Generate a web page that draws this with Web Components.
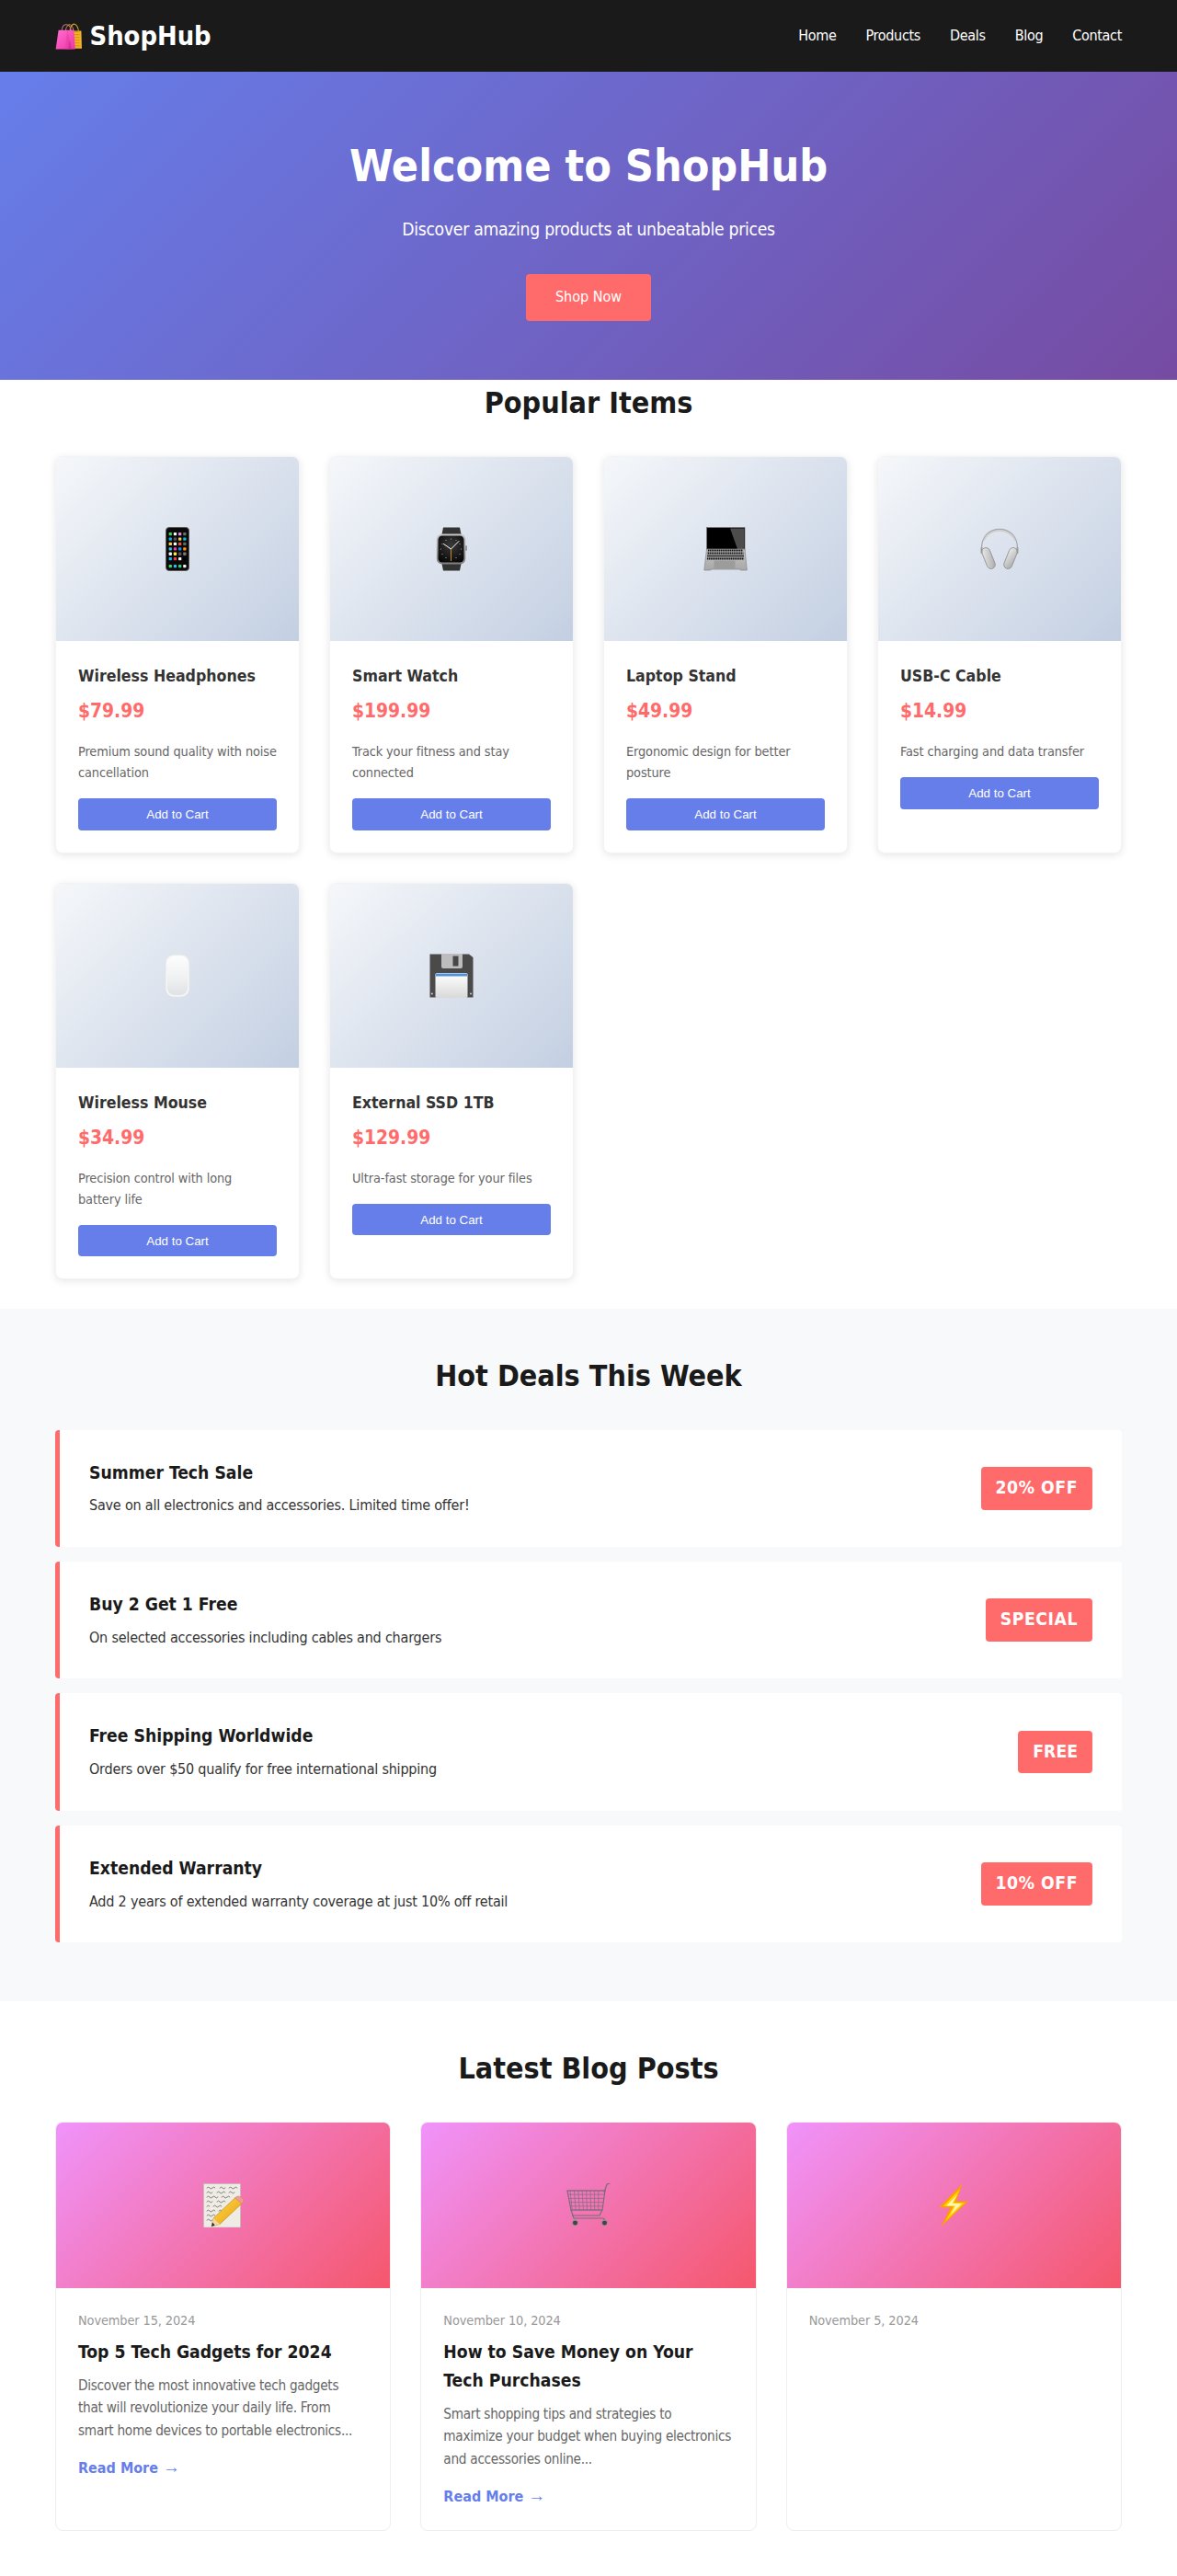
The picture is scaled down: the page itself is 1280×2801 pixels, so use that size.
<!DOCTYPE html>
<html lang="en"><head><meta charset="utf-8"><title>ShopHub</title>
<style>
html,body{margin:0;padding:0;background:#fff}
body{font-family:"DejaVu Sans Condensed","DejaVu Sans",sans-serif;line-height:1.6;color:#333}
</style></head><body>
<shop-app></shop-app>
<script>
function def(name,css,html){
  const t=document.createElement('template');
  t.innerHTML='<style>'+css+'</style>'+html;
  customElements.define(name,class extends HTMLElement{
    constructor(){super();this.attachShadow({mode:'open'}).appendChild(t.content.cloneNode(true));
      for(const a of this.getAttributeNames()){
        const n=this.shadowRoot.querySelector('[data-a="'+a+'"]');if(n)n.textContent=this.getAttribute(a);
        const i=this.shadowRoot.querySelector('emoji-icon[data-i="'+a+'"]');if(i)i.setAttribute('name',this.getAttribute(a));
      }}
  });
}
const phoneRows=[['#35d65a','#f4f4f4','#d98ae0','#6d6d6d'],['#13a9f0','#555','#f7c948','#15b8d8'],['#ffd23c','#f4f4f4','#e8543f','#666'],['#28c3ee','#e93dae','#1f8fe8','#ff9500'],['#f4f4f4','#f5e642','#555','#777'],['#18b7f5','#ee3f3f','#f4f4f4','#000']];
const px=[14.6,19.8,25,30.2],py=[6,11.4,16.8,22.2,27.6,33];
let phoneApps='';phoneRows.forEach((r,j)=>r.forEach((c,i)=>{phoneApps+=`<rect x="${px[i]}" y="${py[j]}" width="3.3" height="3.3" rx=".7" fill="${c}"/>`}));
['#42d66b','#2cb8f0','#3bd07a','#f2f2f2'].forEach((c,i)=>{phoneApps+=`<rect x="${px[i]}" y="41" width="3.3" height="3.3" rx=".7" fill="${c}"/>`});
let ticks='';for(let a=0;a<12;a++){const r=a*Math.PI/6;ticks+=`<circle cx="${(23.5+Math.sin(r)*11).toFixed(1)}" cy="${(24+Math.cos(r)*11).toFixed(1)}" r=".55" fill="#bbb"/>`}
let keys='';for(let y=25.5;y<36;y+=3){keys+=`<path d="M${5-(y-24)*.1} ${y}H${43+(y-24)*.1}" stroke="#111" stroke-width="2.2" stroke-dasharray="1.5 .5"/>`}
let grid='';for(let x=4;x<=38;x+=4.4){grid+=`<path d="M${x} 8L${x+(20-x)*.07+1} 29"/>`}for(let y=8;y<=29;y+=4.2){grid+=`<path d="M${1+(y-8)*.2} ${y}H${42-(y-8)*.18}"/>`}
const ICONS={
phone:`<rect x="11.5" y=".5" width="25" height="47" rx="3.5" fill="#0a0a0a" stroke="#5b5b5b"/>${phoneApps}`,
watch:`<defs><radialGradient id="wf" cx=".5" cy=".35" r=".8"><stop offset="0" stop-color="#3a3a3a"/><stop offset="1" stop-color="#000"/></radialGradient><linearGradient id="wb" x1="0" y1="0" x2="0" y2="1"><stop offset="0" stop-color="#c8c8c8"/><stop offset="1" stop-color="#808080"/></linearGradient></defs>
<path d="M13.5 8L15 .5H33L34.5 8ZM13.5 40L15 47.5H33L34.5 40Z" fill="#333"/><rect x="7.8" y="7.5" width="31.5" height="33" rx="6" fill="url(#wb)"/><rect x="39" y="20" width="2" height="6" rx="1" fill="#999"/><rect x="9.5" y="9.5" width="28" height="29" rx="4.5" fill="url(#wf)"/>${ticks}<path d="M23.5 24L15.5 18.5M23.5 24L32 15.5" stroke="#fff" stroke-width="1" stroke-linecap="round"/><path d="M23.5 24V37" stroke="#c98a22" stroke-width="1"/>`,
laptop:`<defs><linearGradient id="lb" x1="0" y1="0" x2="0" y2="1"><stop offset="0" stop-color="#c4c4c4"/><stop offset="1" stop-color="#a8a8a8"/></linearGradient></defs>
<rect x="3.5" y=".5" width="41.5" height="24.5" fill="#000" stroke="#7c7c7c" stroke-width=".8"/><path d="M29 1.5H44L44 24H37Z" fill="#4c4c4c"/><path d="M3.5 24H45L47.3 47H40.5L39 46H9L7.5 47H.8Z" fill="url(#lb)" stroke="#858585" stroke-width=".7"/>${keys}<rect x="11.5" y="36.5" width="23" height="9" fill="#9c9c9c"/>`,
headphones:`<defs><linearGradient id="hc" x1="0" y1="0" x2="1" y2="1"><stop offset="0" stop-color="#eee"/><stop offset="1" stop-color="#a9a9a9"/></linearGradient></defs>
<path d="M4.5 26C3.5 9 14 2.5 24 2.500S44.500 9 43.500 26" fill="none" stroke="#a8a8a8" stroke-width="1.300"/><path d="M7 15C11 6 18 4 24 4S37 6 41 15" fill="none" stroke="#cfcfcf" stroke-width="1.400"/>
<rect x="7.500" y="22" width="9" height="24" rx="4.500" transform="rotate(-22 12 34)" fill="url(#hc)" stroke="#8f8f8f" stroke-width=".8"/><rect x="31.500" y="22" width="9" height="24" rx="4.500" transform="rotate(22 36 34)" fill="url(#hc)" stroke="#8f8f8f" stroke-width=".8"/><path d="M4.500 23V28M43.500 23V28" stroke="#999" stroke-width="1.800" stroke-linecap="round"/>`,
mouse:`<defs><linearGradient id="mg" x1="0" y1="0" x2="0" y2="1"><stop offset="0" stop-color="#fdfdfd"/><stop offset=".55" stop-color="#f0f1f2"/><stop offset="1" stop-color="#dfe3e5"/></linearGradient></defs><rect x="11" y="1" width="26" height="46" rx="9" fill="#f6f6f6" stroke="#e2e4e6" stroke-width=".8"/><rect x="12.8" y="2.5" width="22.4" height="42.5" rx="8" fill="url(#mg)"/>`,
floppy:`<defs><linearGradient id="fl" x1="0" y1="0" x2="0" y2="1"><stop offset="0" stop-color="#fff"/><stop offset="1" stop-color="#d9d9d9"/></linearGradient></defs>
<path d="M.5.5H43L47.5 4V47.5H.5Z" fill="#4a4a4a"/><path d="M13 0H36V14Q36 16 34 16H15Q13 16 13 14Z" fill="#bdbdbd"/><rect x="25.5" y="2.5" width="6" height="11" fill="#474747"/><rect x="6.5" y="21" width="35" height="27" rx="1.5" fill="url(#fl)"/><rect x="7" y="21.5" width="34" height="3" fill="#4e8fd6"/><circle cx="2.8" cy="43.5" r=".9" fill="#ddd"/><circle cx="45" cy="43.5" r=".9" fill="#ddd"/>`,
memo:`<defs><linearGradient id="pe" x1="0" y1="0" x2="1" y2="1"><stop offset="0" stop-color="#ffd84a"/><stop offset="1" stop-color="#e8a010"/></linearGradient></defs>
<rect x="2.5" y=".5" width="40" height="47.5" fill="#eeece4" stroke="#bdbab0" stroke-width=".6"/><g fill="none" stroke="#555" stroke-width=".7" stroke-linecap="round"><path d="M6 5q2-2 3 0t3 0 3 0M20 5q2-2 3 0t3 0M30 5q2-2 3 0t3 0 3 0"/><path d="M6 10q2-2 3 0t3 0M17 10q2-2 3 0t3 0 3 0M30 10q2-2 3 0t3 0"/><path d="M6 15q2-2 3 0t3 0 3 0 3 0M22 15q2-2 3 0t3 0 3 0"/><path d="M6 20q2-2 3 0t3 0M17 20q2-2 3 0t3 0 3 0"/><path d="M6 25q2-2 3 0M13 25q2-2 3 0t3 0 3 0"/><path d="M6 30q2-2 3 0t3 0 3 0M19 30q2-2 3 0"/><path d="M6 35q2-2 3 0t3 0 3 0"/><path d="M6 40q2-2 3 0t3 0"/></g>
<path d="M37 15.5L44.5 21.5L20 44.5L11 47L13 38Z" fill="url(#pe)" stroke="#a87a10" stroke-width=".5"/><path d="M38 14.5Q41 13 44 15.5T45.5 20.5L44 22L36.5 16Z" fill="#ef9a9a" stroke="#c77" stroke-width=".5"/><path d="M13 38L20 44.5L11 47Z" fill="#f1d6a8"/><path d="M12 42.5L14.6 45.5L11 47Z" fill="#222"/>`,
cart:`<g fill="none" stroke="#8a6f86" stroke-width=".8">${grid}</g><g fill="none" stroke="#7d6a7c" stroke-width="1.2"><path d="M1 8H42L39 29H5Z"/><path d="M41 10L44 1L47.5 0"/><path d="M39 29L36 35H6M5 29L8 38H40L42 40"/></g><circle cx="9.5" cy="43" r="3" fill="#444" stroke="#aaa" stroke-width=".7"/><circle cx="41.5" cy="43" r="3" fill="#444" stroke="#aaa" stroke-width=".7"/><path d="M9.5 38V41M41.5 38V41" stroke="#888" stroke-width="1"/>`,
bolt:`<path d="M33.5 .5L8 26.5H20.5L10 47.5L40 19.5H27Z" fill="#ff9d00"/><path d="M31 6L12.5 25H24L15 41.5L36.5 21H24.5Z" fill="#ffd200"/><path d="M28.5 12L16 24.5H26L20.5 34.5L33 22H22.5Z" fill="#fff6b8"/>`,
bag:`<defs><linearGradient id="bp" x1="0" y1="0" x2="1" y2="1"><stop offset="0" stop-color="#ff6ed0"/><stop offset="1" stop-color="#f034a8"/></linearGradient></defs>
<path d="M27 16C26 6 32 1 35 2S42 8 42 16" fill="none" stroke="#d9a52e" stroke-width="1.8"/><path d="M24 14H47L48 46H24Z" fill="#f2b324"/><path d="M30 16H43M30 21H44M30 26H44M30 31H44M30 36H44M30 41H45" stroke="#d78b18" stroke-width="1.6"/><path d="M12 15C12 5 17 2 21 3S29 8 28 16" fill="none" stroke="#c86a95" stroke-width="1.8"/><path d="M19 15C19 6 24 2 27 3S33 9 33 17" fill="none" stroke="#d9a52e" stroke-width="1.5"/><path d="M6 13H34L36 47H1Z" fill="url(#bp)"/><path d="M22 13L30 47H18Z" fill="#e63f9e" opacity=".6"/><path d="M23 47L26 30L30 47Z" fill="#b62b88" opacity=".55"/>`
};
customElements.define('emoji-icon',class extends HTMLElement{
  static get observedAttributes(){return ['name']}
  constructor(){super();const s=this.attachShadow({mode:'open'});
    s.innerHTML='<style>:host{display:inline-block;width:var(--s,48px);height:var(--s,48px);flex:none}svg{display:block;width:100%;height:100%}</style><svg viewBox="0 0 48 48" aria-hidden="true"></svg>';}
  attributeChangedCallback(){const n=this.getAttribute('name');if(ICONS[n])this.shadowRoot.querySelector('svg').innerHTML=ICONS[n];}
});
def('site-nav',`:host{display:flex;justify-content:space-between;align-items:center;background:#1a1a1a;color:#fff;padding:16px 60px}
.logo{display:flex;align-items:center;gap:8.5px;font-size:28.8px;font-weight:700;--s:29px}
nav{display:flex;gap:32px}a{color:#fff;text-decoration:none;font-size:16px;letter-spacing:-.02em}`,
`<div class="logo"><emoji-icon name="bag"></emoji-icon><span>ShopHub</span></div><nav><a href="#">Home</a><a href="#">Products</a><a href="#">Deals</a><a href="#">Blog</a><a href="#">Contact</a></nav>`);
def('hero-banner',`:host{display:block;background:linear-gradient(135deg,#667eea 0%,#764ba2 100%);color:#fff;padding:64px 60px;text-align:center}
h1{font-size:48px;margin:0 0 16px;font-weight:700;line-height:1.6}
p{font-size:19.2px;margin:0 0 32px;letter-spacing:-.0147em}
a{display:inline-block;background:#ff6b6b;color:#fff;padding:12.8px 32px;border-radius:4px;text-decoration:none;font-size:16px}`,
`<h1>Welcome to ShopHub</h1><p>Discover amazing products at unbeatable prices</p><a href="#">Shop Now</a>`);
def('page-section',`:host{display:block;padding:var(--pt,48px) 60px var(--pb,48px);background:var(--bg,#fff)}
h2{font-size:32px;line-height:1.6;margin:0 0 32px;text-align:center;color:#1a1a1a;font-weight:700}`,
`<h2 data-a="heading"></h2><slot></slot>`);
def('card-grid',`:host{display:grid;grid-template-columns:repeat(var(--cols,4),minmax(0,1fr));gap:32px}`,`<slot></slot>`);
def('deal-list',`:host{display:flex;flex-direction:column;gap:16px;margin-bottom:16px}`,`<slot></slot>`);
def('product-card',`:host{display:block;background:#fff;border:1px solid #f3f3f3;border-radius:8px;box-shadow:0 2px 8px rgba(0,0,0,.1);overflow:hidden}
.img{height:200px;background:linear-gradient(135deg,#f5f7fa 0%,#c3cfe2 100%);display:flex;align-items:center;justify-content:center}
.c{padding:24px}
h3{margin:0 0 8px;font-size:17.6px;color:#333;font-weight:700}
.p{font-size:20.8px;font-weight:700;color:#ff6b6b;margin:0 0 16px}
.d{font-size:14.4px;color:#666;margin:0 0 16px;letter-spacing:-.008em}
button{display:block;width:100%;background:#667eea;color:#fff;border:0;border-radius:4px;padding:9.6px;font-family:"Liberation Sans",sans-serif;font-size:13.333px}`,
`<div class="img"><emoji-icon data-i="icon"></emoji-icon></div><div class="c"><h3 data-a="name"></h3><div class="p" data-a="price"></div><div class="d" data-a="desc"></div><button>Add to Cart</button></div>`);
def('deal-card',`:host{display:flex;justify-content:space-between;align-items:center;background:#fff;border-left:5px solid #ff6b6b;border-radius:4px;padding:32px}
h3{margin:0 0 8px;font-size:19.2px;color:#1a1a1a;font-weight:700}
p{margin:0;font-size:16px;line-height:24.7px;color:#333;letter-spacing:-.0128em}
.b{background:#ff6b6b;color:#fff;font-weight:700;font-size:19.2px;padding:8px 16px;border-radius:4px;letter-spacing:var(--ls,.55px)}`,
`<div><h3 data-a="name"></h3><p data-a="desc"></p></div><div class="b" data-a="badge"></div>`);
def('blog-card',`:host{display:block;background:#fff;border:1px solid #eee;border-radius:8px;overflow:hidden}
.img{height:180px;background:linear-gradient(135deg,#f093fb 0%,#f5576c 100%);display:flex;align-items:center;justify-content:center}
.c{padding:24px}
.dt{font-size:14.4px;color:#999;margin-bottom:8px;letter-spacing:-.007em}
::slotted(h3){margin:0 0 8px;font-size:19.2px;color:#1a1a1a}
::slotted(p){margin:0 0 16px;font-size:15.2px;color:#666;letter-spacing:-.018em}
::slotted(a){color:#667eea;font-weight:700;text-decoration:none;font-size:16px}`,
`<div class="img"><emoji-icon data-i="icon"></emoji-icon></div><div class="c"><div class="dt" data-a="date"></div><slot></slot></div>`);
const arrow='<span style="font-family:\'Liberation Sans\',sans-serif;font-weight:400;font-size:19px;line-height:1">→</span>';
def('shop-app',`:host{display:block}`,`
<site-nav></site-nav><hero-banner></hero-banner>
<page-section heading="Popular Items" style="--pt:0px;--pb:32px"><card-grid>
<product-card icon="phone" name="Wireless Headphones" price="$79.99" desc="Premium sound quality with noise cancellation"></product-card>
<product-card icon="watch" name="Smart Watch" price="$199.99" desc="Track your fitness and stay connected"></product-card>
<product-card icon="laptop" name="Laptop Stand" price="$49.99" desc="Ergonomic design for better posture"></product-card>
<product-card icon="headphones" name="USB-C Cable" price="$14.99" desc="Fast charging and data transfer"></product-card>
<product-card icon="mouse" name="Wireless Mouse" price="$34.99" desc="Precision control with long battery life"></product-card>
<product-card icon="floppy" name="External SSD 1TB" price="$129.99" desc="Ultra-fast storage for your files"></product-card>
</card-grid></page-section>
<page-section heading="Hot Deals This Week" style="--bg:#f8f9fa"><deal-list>
<deal-card name="Summer Tech Sale" desc="Save on all electronics and accessories. Limited time offer!" badge="20% OFF"></deal-card>
<deal-card name="Buy 2 Get 1 Free" desc="On selected accessories including cables and chargers" badge="SPECIAL"></deal-card>
<deal-card name="Free Shipping Worldwide" desc="Orders over $50 qualify for free international shipping" badge="FREE" style="--ls:0px"></deal-card>
<deal-card name="Extended Warranty" desc="Add 2 years of extended warranty coverage at just 10% off retail" badge="10% OFF"></deal-card>
</deal-list></page-section>
<page-section heading="Latest Blog Posts"><card-grid style="--cols:3">
<blog-card icon="memo" date="November 15, 2024"><h3>Top 5 Tech Gadgets for 2024</h3><p>Discover the most innovative tech gadgets<br>that will revolutionize your daily life. From smart home devices to portable electronics...</p><a href="#">Read More ${arrow}</a></blog-card>
<blog-card icon="cart" date="November 10, 2024"><h3>How to Save Money on Your Tech Purchases</h3><p>Smart shopping tips and strategies to maximize your budget when buying electronics and accessories online...</p><a href="#">Read More ${arrow}</a></blog-card>
<blog-card icon="bolt" date="November 5, 2024"></blog-card>
</card-grid></page-section>`);
</script></body></html>
